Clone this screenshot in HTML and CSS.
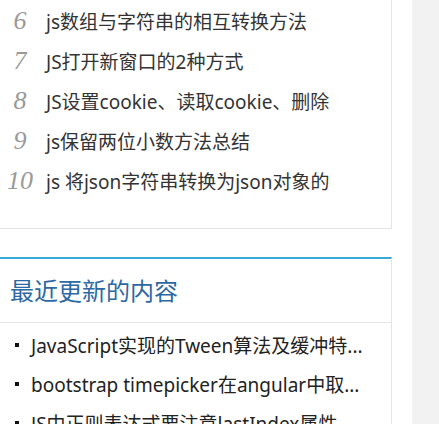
FILE: index.html
```html
<!DOCTYPE html>
<html lang="zh-CN">
<head>
<meta charset="utf-8">
<title>文章列表</title>
<link rel="stylesheet" href="styles.css">
</head>
<body>
<div class="page">
  <div class="main">
    <div class="panel hot">
      <ol class="hot-list">
        <li class="hot-item"><span class="num">6</span><a class="hot-link" href="#">js数组与字符串的相互转换方法</a></li>
        <li class="hot-item"><span class="num">7</span><a class="hot-link" href="#">JS打开新窗口的2种方式</a></li>
        <li class="hot-item"><span class="num">8</span><a class="hot-link" href="#">JS设置cookie、读取cookie、删除</a></li>
        <li class="hot-item"><span class="num">9</span><a class="hot-link" href="#">js保留两位小数方法总结</a></li>
        <li class="hot-item"><span class="num">10</span><a class="hot-link" href="#">js 将json字符串转换为json对象的</a></li>
      </ol>
    </div>
    <div class="panel recent">
      <h3 class="panel-title">最近更新的内容</h3>
      <ul class="recent-list">
        <li class="recent-item"><a class="recent-link" href="#">JavaScript实现的Tween算法及缓冲特...</a></li>
        <li class="recent-item"><a class="recent-link" href="#">bootstrap timepicker在angular中取...</a></li>
        <li class="recent-item"><a class="recent-link" href="#">JS中正则表达式要注意lastIndex属性</a></li>
      </ul>
    </div>
  </div>
  <div class="side"></div>
</div>
</body>
</html>
```
FILE: styles.css
```css
html, body {
  margin: 0;
  padding: 0;
  height: 100%;
  overflow: hidden;
}
body {
  background: #f2f2f2;
  font-family: "Noto Sans", "Noto Sans CJK SC", sans-serif;
  color: #333;
}
a {
  color: inherit;
  text-decoration: none;
}
.page {
  display: flex;
  height: 100%;
}
.main {
  width: 412px;
  flex: none;
  background: #fff;
}
.side {
  flex: 1;
  background: #f2f2f2;
}
.panel {
  width: 392px;
  box-sizing: border-box;
  background: #fff;
  border-right: 1px solid #e5e5e5;
}
.hot {
  border-bottom: 1px solid #e5e5e5;
  padding: 1px 0 27px;
}
.hot-list {
  list-style: none;
  margin: 0;
  padding: 0;
}
.hot-item {
  display: flex;
  align-items: center;
  height: 40px;
}
.num {
  width: 40px;
  text-align: center;
  font-family: "Liberation Serif", serif;
  font-style: italic;
  font-size: 26px;
  color: #999;
}
.hot-link {
  margin-left: 6px;
  font-size: 19px;
  color: #333;
  white-space: nowrap;
}
.recent {
  margin-top: 28px;
  border-top: 2px solid #3aa9d6;
}
.panel-title {
  margin: 0;
  height: 63px;
  line-height: 63px;
  padding-left: 10px;
  font-size: 24px;
  font-weight: normal;
  color: #2c68a4;
  border-bottom: 1px solid #e5e5e5;
}
.recent-list {
  list-style: none;
  margin: 0;
  padding: 2px 0 0;
}
.recent-item {
  display: flex;
  align-items: center;
  height: 39px;
  padding-left: 15px;
}
.recent-item::before {
  content: "";
  width: 4px;
  height: 4px;
  background: #111;
  margin-right: 12px;
  flex: none;
}
.recent-link {
  font-size: 19px;
  color: #222;
  white-space: nowrap;
}
```
